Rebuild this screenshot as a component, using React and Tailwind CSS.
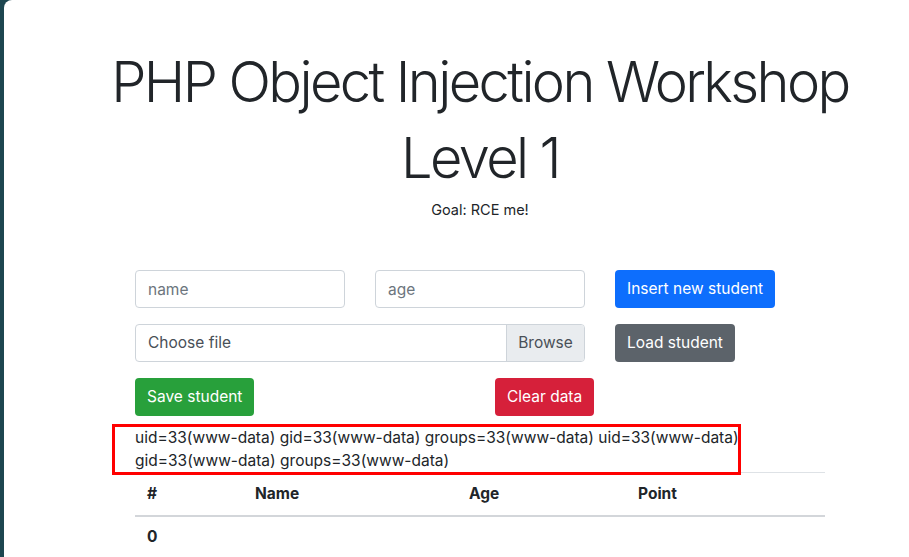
import React from "react";

export default function App() {
  return (
    <div className="min-h-screen w-full overflow-hidden bg-[#1d4650] flex font-['Inter',sans-serif] text-[#212529]">
      <div className="ml-[4px] w-[952px] shrink-0 bg-white rounded-tl-[8px] min-h-screen">
        {/* --- TITLE --- */}
        <h1 className="pt-[44px] text-center font-light text-[56px] leading-[76px] tracking-[-2.6px] text-[#212529]">
          PHP Object Injection Workshop
          <br />
          Level 1
        </h1>
        <p className="mt-[2px] text-center text-[14.5px] leading-6">Goal: RCE me!</p>

        {/* --- FORM --- */}
        <div className="w-[690px] mx-auto mt-[48px] text-[15.5px]">
          <div className="flex gap-[30px] h-[38px]">
            <input
              className="w-[210px] h-[38px] border border-[#ced4da] rounded-[4px] px-3 outline-none placeholder:text-[#6c757d]"
              placeholder="name"
            />
            <input
              className="w-[210px] h-[38px] border border-[#ced4da] rounded-[4px] px-3 outline-none placeholder:text-[#6c757d]"
              placeholder="age"
            />
            <button className="h-[38px] px-3 rounded-[4px] bg-[#0d6efd] text-white">
              Insert new student
            </button>
          </div>

          <div className="flex gap-[30px] mt-4 h-[38px]">
            <div className="w-[450px] h-[38px] flex border border-[#ced4da] rounded-[4px] overflow-hidden">
              <div className="flex-1 flex items-center px-3 text-[#495057]">Choose file</div>
              <div className="w-[78px] flex items-center justify-center bg-[#e9ecef] border-l border-[#ced4da] text-[#495057]">
                Browse
              </div>
            </div>
            <button className="h-[38px] px-3 rounded-[4px] bg-[#5c636a] text-white">
              Load student
            </button>
          </div>

          <div className="flex mt-4 h-[38px]">
            <div className="w-[360px]">
              <button className="h-[38px] px-3 rounded-[4px] bg-[#28a03b] text-white">
                Save student
              </button>
            </div>
            <button className="h-[38px] px-3 rounded-[4px] bg-[#d6203a] text-white">
              Clear data
            </button>
          </div>

          {/* --- OUTPUT --- */}
          <div className="relative mt-[10px] leading-[23px]">
            uid=33(www-data) gid=33(www-data) groups=33(www-data) uid=33(www-data)
            <br />
            gid=33(www-data) groups=33(www-data)
            <div className="absolute left-[-23px] top-[-2px] w-[629px] h-[51px] border-[3px] border-[#ff0000]" />
          </div>

          {/* --- TABLE --- */}
          <table className="w-full text-left border-collapse">
            <thead>
              <tr className="border-t border-[#dee2e6] border-b-2 border-b-[#d3d6da]">
                <th className="w-[108px] h-[43px] px-3 font-bold">#</th>
                <th className="w-[214px] px-3 font-bold">Name</th>
                <th className="w-[169px] px-3 font-bold">Age</th>
                <th className="px-3 font-bold">Point</th>
              </tr>
            </thead>
            <tbody>
              <tr>
                <td className="px-3 py-2 leading-6 font-bold">0</td>
                <td className="px-3 py-2"></td>
                <td className="px-3 py-2"></td>
                <td className="px-3 py-2"></td>
              </tr>
            </tbody>
          </table>
        </div>
      </div>
    </div>
  );
}
